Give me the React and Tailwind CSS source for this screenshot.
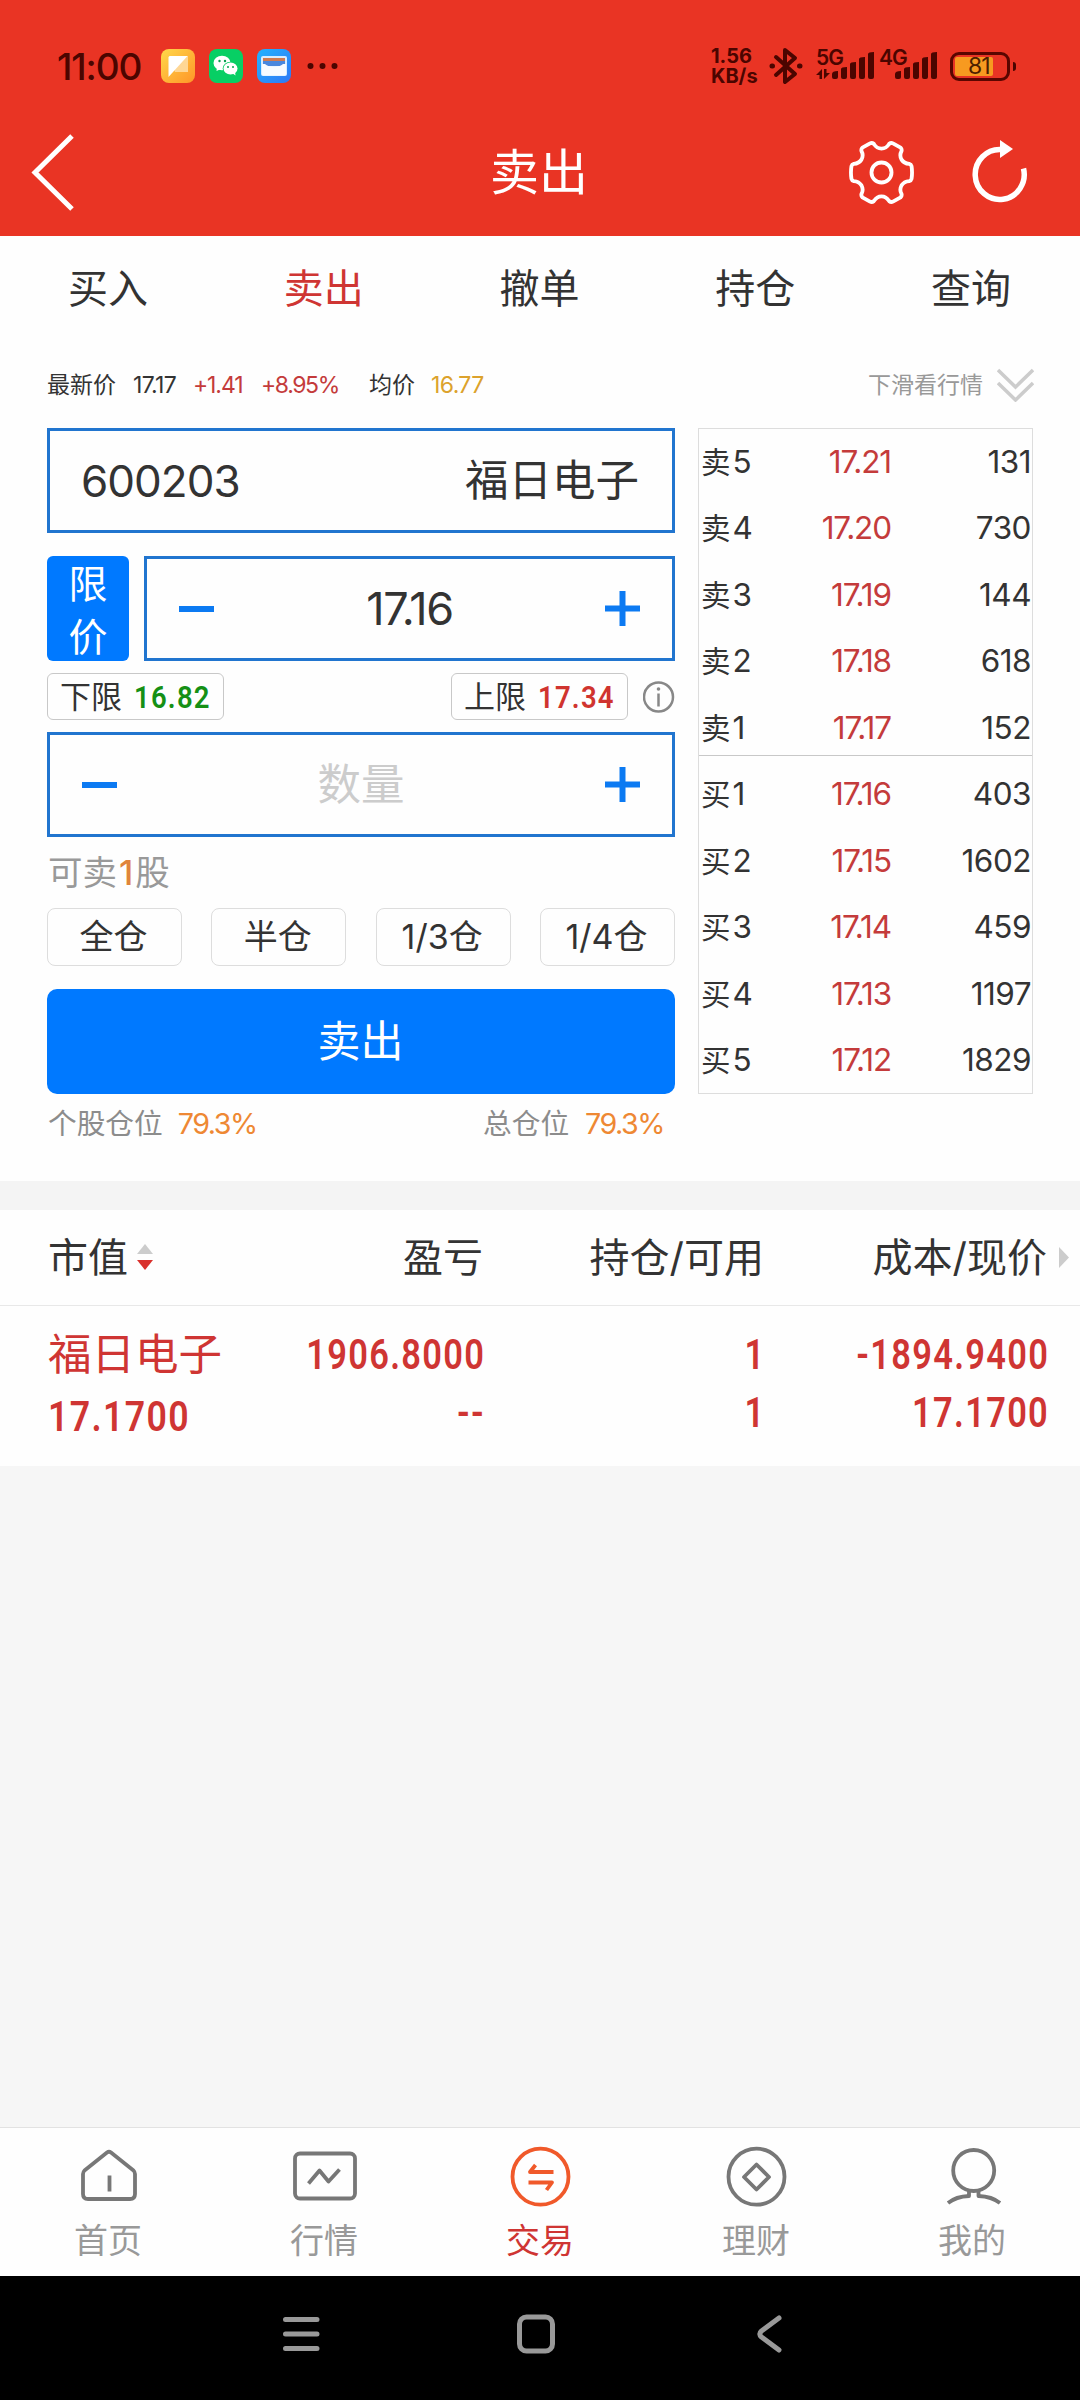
import React from 'react';

const tabs = ['买入', '卖出', '撤单', '持仓', '查询'];

const book = [
  ['卖5', '17.21', '131'],
  ['卖4', '17.20', '730'],
  ['卖3', '17.19', '144'],
  ['卖2', '17.18', '618'],
  ['卖1', '17.17', '152'],
  ['买1', '17.16', '403'],
  ['买2', '17.15', '1602'],
  ['买3', '17.14', '459'],
  ['买4', '17.13', '1197'],
  ['买5', '17.12', '1829'],
];

function Signal() {
  return (
    <svg width="42" height="27" viewBox="0 0 42 27" fill="#4b0500">
      <path d="M0 22q0-3 6-3v6q0 2-2 2H2q-2 0-2-2z" />
      <path d="M9 17q0-2 6-2v10q0 2-2 2h-2q-2 0-2-2z" />
      <path d="M18 12q0-2 6-2v15q0 2-2 2h-2q-2 0-2-2z" />
      <path d="M27 7q0-2 6-2v20q0 2-2 2h-2q-2 0-2-2z" />
      <path d="M36 2q0-2 6-2v25q0 2-2 2h-2q-2 0-2-2z" />
    </svg>
  );
}

function StatusBar() {
  return (
    <div className="h-[104px] pt-[45px] flex items-start text-[#4b0500]">
      <div className="h-[42px] flex items-center pl-[57px]">
        <span className="w-[104px] text-[37px] leading-none font-medium tracking-[-1.1px]">11:00</span>
        <svg width="34" height="34" viewBox="0 0 34 34" className="mr-[14px]">
          <defs>
            <linearGradient id="note" x1="0" y1="0" x2="1" y2="1"><stop stopColor="#ffd84a" /><stop offset="1" stopColor="#ff9528" /></linearGradient>
          </defs>
          <rect width="34" height="34" rx="8" fill="url(#note)" />
          <path d="M8 7h19v16H14z" fill="#ffd795" />
          <path d="M9 7h17.500L7.500 28V8.500Q7.500 7 9 7z" fill="#fff" />
        </svg>
        <svg width="34" height="34" viewBox="0 0 34 34" className="mr-[14px]">
          <rect width="34" height="34" rx="8" fill="#07cf64" />
          <path d="M8 18l-.5 4 4.500-2z" fill="#fff" />
          <ellipse cx="13" cy="14" rx="8.500" ry="7.300" fill="#fff" />
          <ellipse cx="21.500" cy="19.500" rx="7.800" ry="6.800" fill="#07cf64" />
          <ellipse cx="21.500" cy="19.500" rx="7" ry="6" fill="#fff" />
          <path d="M23 24l3.500 2.500-.5-4z" fill="#fff" />
          <g fill="#07a04e"><circle cx="10.500" cy="12" r="1.200" /><circle cx="16" cy="12" r="1.200" /><circle cx="19" cy="18" r="1" /><circle cx="24" cy="18" r="1" /></g>
        </svg>
        <svg width="34" height="34" viewBox="0 0 34 34" className="mr-[16px]">
          <defs>
            <linearGradient id="wallet" x1="0" y1="0" x2="1" y2="1"><stop stopColor="#22b2ff" /><stop offset="1" stopColor="#2f78f5" /></linearGradient>
          </defs>
          <rect width="34" height="34" rx="8" fill="url(#wallet)" />
          <rect x="4" y="7" width="26" height="20" rx="2" fill="#d6ecff" />
          <rect x="6" y="9" width="22" height="3" fill="#cf7b50" />
          <rect x="6" y="12" width="22" height="5" fill="#4987dd" />
          <path d="M5 15h3q2 2.500 9 2.500t9-2.500h3v10q0 1.500-1.500 1.500h-21Q5 26.500 5 25z" fill="#f7fbff" />
        </svg>
        <svg width="32" height="8" viewBox="0 0 32 8" fill="#4b0500"><circle cx="3.500" cy="4" r="3" /><circle cx="15.500" cy="4" r="3" /><circle cx="27.500" cy="4" r="3" /></svg>
      </div>
      <div className="ml-auto pr-[64px] flex h-[42px] items-center">
        <div className="w-[58px] text-[20px] leading-[20px] font-bold">
          <div>1.56</div>
          <div>KB/s</div>
        </div>
        <svg width="34" height="38" viewBox="0 0 34 38" fill="none" stroke="#4b0500" strokeWidth="4" strokeLinejoin="round" strokeLinecap="round" className="mr-[13px]">
          <path d="M7 10l19 17-10 8V3l10 8L7 28" />
          <path d="M3 19h.5M30.500 19h.5" strokeWidth="5" />
        </svg>
        <div className="relative w-[58px] h-[34px] flex items-end justify-end pb-[4px]">
          <span className="absolute left-0 top-0 text-[21px] leading-[18px] font-semibold tracking-[-1px]">5G</span>
          <svg width="14" height="10" viewBox="0 0 14 10" fill="#4b0500" className="absolute left-0 bottom-[4px]"><path d="M6 0v10H3.500V6H0zM8 10V0h2.500v4H14z" /></svg>
          <Signal />
        </div>
        <div className="relative w-[63px] h-[34px] flex items-end justify-end pb-[4px] mr-[13px]">
          <span className="absolute left-[5px] top-0 text-[21px] leading-[18px] font-semibold tracking-[-1px]">4G</span>
          <Signal />
        </div>
        <div className="relative w-[60px] h-[29px] border-[3.500px] border-[#5a0600] rounded-[9px] p-[2px]">
          <div className="w-[38px] h-[19px] bg-[#f79a20] rounded-[2px]" />
          <span className="absolute left-[15px] top-[1px] text-[23px] leading-[21px] text-[#4b2000] tracking-[-1px]">81</span>
        </div>
        <div className="w-[3px] h-[9px] bg-[#4b0500] rounded-r-[3px] ml-[3px]" />
      </div>
    </div>
  );
}

function Header() {
  return (
    <div className="h-[236px] bg-[#e93424]">
      <StatusBar />
      <div className="flex items-center h-[132px]">
        <div className="w-[459px] pl-[30px] pt-[5px]">
          <svg width="46" height="80" viewBox="0 0 46 80" fill="none" stroke="#fff" strokeWidth="5"><path d="M42 3L5 39.500 42 76" /></svg>
        </div>
        <div className="w-[160px] text-center text-[49px] leading-none text-white pt-[5px]">卖出</div>
        <div className="w-[461px] flex items-center justify-end pr-[50px] pt-[4px]">
          <svg width="65" height="63" viewBox="0 0 68 66" fill="none" stroke="#fff" strokeWidth="4" strokeLinejoin="round" className="mr-[56px]">
            <path d="M22 2.500Q24 1.500 26 3Q29 8 34 8Q39 8 42 3Q44 1.500 46 2.500L54 7Q55.500 8.500 55 10.500Q52.500 15 55 19.500Q57.500 23.500 63 24Q65 24.500 65.500 26.500Q66.500 33 65.500 39.500Q65 41.500 63 42Q57.500 42.500 55 46.500Q52.500 51 55 55.500Q55.500 57.500 54 59L46 63.500Q44 64.500 42 63Q39 58 34 58Q29 58 26 63Q24 64.500 22 63.500L14 59Q12.500 57.500 13 55.500Q15.500 51 13 46.500Q10.500 42.500 5 42Q3 41.500 2.500 39.500Q1.500 33 2.500 26.500Q3 24.500 5 24Q10.500 23.500 13 19.500Q15.500 15 13 10.500Q12.500 8.500 14 7z" />
            <circle cx="34" cy="33" r="10.500" />
          </svg>
          <svg width="60" height="64" viewBox="0 0 60 64" fill="none" stroke="#fff" strokeWidth="5.500">
            <path d="M53.500 28.500A24.500 25 0 1 1 31 9.500" />
            <path d="M30 0v18l13-9z" fill="#fff" stroke="none" />
          </svg>
        </div>
      </div>
    </div>
  );
}

function Minus() {
  return <span className="block w-[35px] h-[6px] bg-[#0c7af2]" />;
}

function Plus() {
  return (
    <svg width="35" height="35" viewBox="0 0 35 35" stroke="#0c7af2" strokeWidth="6"><path d="M0 17.500h35M17.500 0v35" /></svg>
  );
}

function QuoteLine() {
  return (
    <div className="h-[88px] pt-[2px] flex items-center pl-[47px] pr-[46px] text-[23px] leading-none text-[#333]">
      <span className="w-[86px]">最新价</span>
      <span className="w-[60px] tracking-[-0.7px]">17.17</span>
      <span className="w-[68px] text-[#c43b3b] tracking-[-1.1px]">+1.41</span>
      <span className="w-[108px] text-[#c43b3b] tracking-[-1.4px]">+8.95%</span>
      <span className="w-[62px]">均价</span>
      <span className="text-[#dca22c] tracking-[-0.6px]">16.77</span>
      <span className="ml-auto text-[#999]">下滑看行情</span>
      <svg width="37" height="34" viewBox="0 0 37 34" fill="none" stroke="#ccc" strokeWidth="3.500" className="ml-[14px]"><path d="M1 2l17.500 17L36 2M1 15l17.500 17L36 15" /></svg>
    </div>
  );
}

function Limit({ label, value, color }) {
  return (
    <div className="w-[177px] h-[47px] border border-[#c8c8c8] rounded-[6px] flex items-center pl-[12px] text-[#333]">
      <span className="w-[77px] text-[31px] leading-none">{label}</span>
      <span className={"font-['Roboto'] font-semibold text-[32px] leading-none pt-px tracking-[1.4px] origin-left scale-x-[0.86] " + color}>{value}</span>
    </div>
  );
}

function OrderForm() {
  return (
    <div className="w-[628px] text-[#333]">
      <div className="h-[105px] border-[3px] border-[#2175cf] flex items-center justify-between pl-[31px] pr-[33px] text-[44px] leading-none">
        <span className="tracking-[-1px]">600203</span>
        <span className="text-[43.500px]">福日电子</span>
      </div>
      <div className="mt-[23px] flex justify-between">
        <div className="w-[82px] h-[105px] pt-px bg-[#0079ff] rounded-[6px] text-white text-[39px] leading-[53px] text-center"><div>限</div><div>价</div></div>
        <div className="w-[531px] h-[105px] border-[3px] border-[#2175cf] flex items-center justify-between px-[32px]">
          <Minus />
          <span className="text-[45px] leading-none tracking-[-1.4px]">17.16</span>
          <Plus />
        </div>
      </div>
      <div className="mt-[12px] flex items-center">
        <Limit label="下限" value="16.82" color="text-[#159015]" />
        <div className="ml-auto mr-[15px]"><Limit label="上限" value="17.34" color="text-[#d0342f]" /></div>
        <svg width="32" height="32" viewBox="0 0 32 32" fill="none" stroke="#888" strokeWidth="2.500">
          <circle cx="15.500" cy="16" r="14.500" />
          <path d="M15.500 12.500v13" />
          <circle cx="15.500" cy="8" r="1.800" fill="#888" stroke="none" />
        </svg>
      </div>
      <div className="mt-[12px] h-[105px] border-[3px] border-[#2175cf] flex items-center justify-between px-[32px]">
        <Minus />
        <span className="text-[43.500px] leading-none text-[#ccc]">数量</span>
        <Plus />
      </div>
      <div className="h-[71px] flex items-center pl-px pt-px text-[34.500px] leading-none text-[#999]">
        可卖<span className="text-[#e0853a] font-medium px-[2px]">1</span>股
      </div>
      <div className="flex justify-between text-[34px] leading-none">
        {['全仓', '半仓', '1/3仓', '1/4仓'].map(t => (
          <div key={t} className="w-[135px] h-[58px] border border-[#ddd] rounded-[8px] flex items-center justify-center pr-[2px]">{t}</div>
        ))}
      </div>
      <div className="mt-[23px] h-[105px] bg-[#0079ff] rounded-[10px] flex items-center justify-center pr-px text-[43px] leading-none text-white">卖出</div>
      <div className="h-[60px] flex items-center pt-px pl-px pr-[11px] text-[28.700px] leading-none text-[#8c8c8c]">
        <span>个股仓位</span>
        <span className="ml-[15px] text-[#ee8833] tracking-[-1.5px]">79.3%</span>
        <span className="ml-auto">总仓位</span>
        <span className="ml-[16px] text-[#ee8833] tracking-[-1.5px]">79.3%</span>
      </div>
    </div>
  );
}

function OrderBook() {
  return (
    <div className="relative w-[335px] h-[666px] border border-[#ddd] text-[31.500px] leading-none text-[#333]">
      {book.map(([name, price, qty]) => (
        <div key={name} className="h-[66.500px] flex items-center pb-[2px] pl-[2px] pr-[1px]">
          <span className="w-[90px] text-[29.500px]">{name[0]}<span className="text-[31.500px] ml-[2px]">{name[1]}</span></span>
          <span className="w-[100px] text-right text-[#c43b3b] tracking-[-1.1px]">{price}</span>
          <span className="ml-auto tracking-[-0.5px]">{qty}</span>
        </div>
      ))}
      <div className="absolute left-0 right-0 top-[326px] h-px bg-[#c8c8c8]" />
    </div>
  );
}

function Num({ children, left }) {
  return (
    <span className={"block font-['Roboto'] font-semibold text-[42px] leading-none tracking-[1.6px] " + (left ? 'origin-left scale-x-[0.85]' : 'origin-right scale-x-[0.82]')}>{children}</span>
  );
}

function Holdings() {
  return (
    <div className="bg-[#fefefe]">
      <div className="h-[96px] border-b border-[#e8e8e8] flex items-center text-[40px] leading-none text-[#333]">
        <div className="w-[283px] pl-[48px] flex items-center">
          市值
          <svg width="16" height="28" viewBox="0 0 16 28" className="ml-[9px]"><path d="M0 10L8 0l8 10z" fill="#ccc" /><path d="M0 16h16L8 26z" fill="#d9302c" /></svg>
        </div>
        <div className="w-[200px] text-right">盈亏</div>
        <div className="w-[281px] text-right">持仓/可用</div>
        <div className="w-[283px] text-right">成本/现价</div>
        <svg width="10" height="21" viewBox="0 0 10 21" className="ml-[12px]"><path d="M0 0l10 10.500L0 21z" fill="#ccc" /></svg>
      </div>
      <div className="h-[160px] flex pt-[27px] text-[#cf3533]">
        <div className="w-[283px] pl-[48px]">
          <div className="text-[43.500px] leading-none">福日电子</div>
          <div className="mt-[19px]"><Num left>17.1700</Num></div>
        </div>
        <div className="w-[202px] pt-px flex flex-col items-end gap-[16px]"><Num>1906.8000</Num><Num>--</Num></div>
        <div className="w-[281px] pt-px flex flex-col items-end gap-[16px]"><Num>1</Num><Num>1</Num></div>
        <div className="w-[283px] pt-px flex flex-col items-end gap-[16px]"><Num>-1894.9400</Num><Num>17.1700</Num></div>
      </div>
    </div>
  );
}

const nav = [
  ['首页', <><path d="M31 5.500Q33 4 35 5.500L57.500 23.500Q59 25 59 27v20q0 5-5 5H12q-5 0-5-5V27q0-2 1.500-3.500z" /><path d="M33.500 28.500v16" /></>],
  ['行情', <><rect x="3" y="6.500" width="60" height="45" rx="5" /><path d="M16.500 36.500l11-13 9 11 11-12" /></>],
  ['交易', <><circle cx="32.500" cy="29.700" r="28" /><path d="M45.500 25H22L27.500 18M20.500 35.500H44L38.500 43" /></>],
  ['理财', <><circle cx="32.500" cy="29.700" r="28" /><path d="M32.500 17.500L45 30 32.500 42.500 20 30z" /></>],
  ['我的', <><circle cx="33.700" cy="23.500" r="20.500" /><path d="M29 44v5Q16 49.500 8 56M38.500 44v5Q52 49.500 60 56" /></>],
];

function BottomNav() {
  return (
    <div className="h-[149px] border-t border-[#e2e2e2] bg-[#fefefe] flex">
      {nav.map(([label, icon], i) => (
        <div key={label} className={'flex-1 flex flex-col items-center pt-[19px] ' + (i === 2 ? 'text-[#cf3533]' : 'text-[#999]')}>
          <svg width="64" height="60" viewBox="0 0 64 60" fill="none" stroke={i === 2 ? '#f0592a' : '#777'} strokeWidth="3.800" strokeLinejoin="round" className="overflow-visible">{icon}</svg>
          <span className="mt-[17px] text-[34px] leading-none">{label}</span>
        </div>
      ))}
    </div>
  );
}

export default function App() {
  return (
    <div className="w-[1080px] h-[2400px] flex flex-col bg-[#f6f6f6] font-['Inter','Noto_Sans_CJK_SC',sans-serif] whitespace-nowrap overflow-hidden">
      <Header />
      <div className="h-[945px] bg-[#fefefe]">
        <div className="h-[104px] pt-[2px] pr-[1px] grid grid-cols-5 items-center text-center text-[40px] leading-none text-[#333]">
          {tabs.map(t => <div key={t} className={t === '卖出' ? 'text-[#cf3533]' : ''}>{t}</div>)}
        </div>
        <QuoteLine />
        <div className="flex justify-between pl-[47px] pr-[47px]">
          <OrderForm />
          <OrderBook />
        </div>
      </div>
      <div className="h-[29px] bg-[#f4f4f4]" />
      <Holdings />
      <div className="flex-1" />
      <BottomNav />
      <div className="h-[124px] bg-black">
        <svg width="1080" height="124" viewBox="0 0 1080 124" fill="none" stroke="#999" strokeWidth="5" strokeLinecap="round" strokeLinejoin="round">
          <path d="M285.500 43.500h31.500M285.500 58h31.500M285.500 72.500h31.500" />
          <rect x="519.500" y="41" width="33" height="34" rx="7" />
          <path d="M779 42L761.500 55Q758 58 761.500 61L779 74" />
        </svg>
      </div>
    </div>
  );
}
